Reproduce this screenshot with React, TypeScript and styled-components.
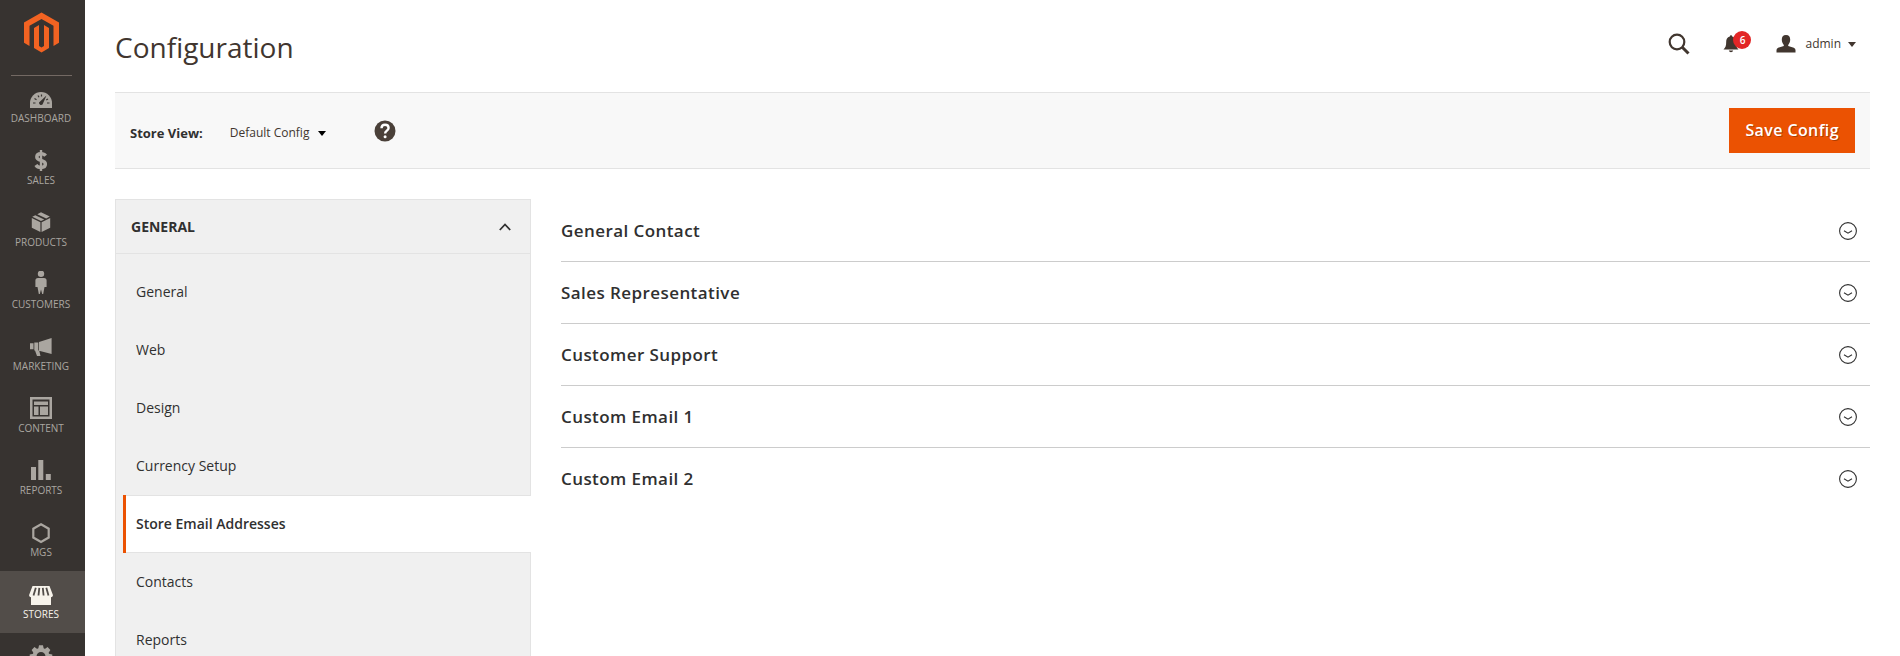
import React from 'react';
import styled, { createGlobalStyle, css } from 'styled-components';

const GlobalStyle = createGlobalStyle`
  *, *::before, *::after { box-sizing: border-box; }
  body {
    margin: 0;
    background: #fff;
    color: #303030;
    font-family: 'Open Sans', 'Noto Sans', sans-serif;
    font-size: 14px;
    line-height: 20px;
  }
  a { color: inherit; text-decoration: none; }
  button, select { font: inherit; color: inherit; }
  ul { list-style: none; margin: 0; padding: 0; }
`;

const Shell = styled.div`
  display: flex;
  min-height: 100vh;
`;

const Sidebar = styled.nav`
  flex: none;
  width: 85px;
  background: #373330;
`;

const LogoLink = styled.a`
  display: block;
  height: 75px;
  padding: 12px 0 0 23px;
  svg { display: block; }
`;

const Menu = styled.ul`
  &::before {
    content: '';
    display: block;
    height: 1px;
    margin: 0 13px -1px 11px;
    background: #736963;
  }
`;

const MenuLink = styled.a<{ $active?: boolean }>`
  display: flex;
  flex-direction: column;
  align-items: center;
  height: 62px;
  padding: 10px 3px 0 0;
  color: ${(p) => (p.$active ? '#f7f3eb' : '#aaa6a0')};
  background: ${(p) => (p.$active ? '#524d49' : 'transparent')};
  font-size: 10px;
  line-height: 12px;
  text-transform: uppercase;
  svg { display: block; flex: none; margin-bottom: -1px; }
`;

const Main = styled.main`
  flex: 1;
  min-width: 0;
  padding: 0 30px;
`;

const PageHeader = styled.header`
  display: flex;
  justify-content: space-between;
  height: 92px;
`;

const Title = styled.h1`
  margin: 0;
  padding-top: 27px;
  font-size: 28px;
  line-height: 40px;
  font-weight: 400;
  color: #41362f;
`;

const HeaderTools = styled.div`
  display: flex;
  align-items: center;
  height: 40px;
  margin-top: 24px;
  padding-right: 14px;
  color: #41362f;
`;

const ToolButton = styled.button<{ $gap: number }>`
  display: flex;
  align-items: center;
  position: relative;
  margin: 0 0 0 ${(p) => p.$gap}px;
  padding: 0;
  border: 0;
  background: none;
  font-size: 12px;
  color: #41362f;
  cursor: pointer;
  svg { display: block; }
`;

const Badge = styled.span`
  position: absolute;
  top: -4px;
  left: 10px;
  width: 18px;
  height: 18px;
  border-radius: 9px;
  background: #e22626;
  color: #fff;
  font-size: 10px;
  font-weight: 600;
  line-height: 18px;
  text-align: center;
`;

const UserName = styled.span`
  margin: 0 7px 0 9px;
`;

const ActionBar = styled.div`
  display: flex;
  align-items: center;
  height: 77px;
  padding: 0 15px;
  background: #f8f8f8;
  border-top: 1px solid #e3e3e3;
  border-bottom: 1px solid #e3e3e3;
`;

const StoreLabel = styled.label`
  padding-top: 5px;
  font-size: 13px;
  font-weight: 700;
`;

const SelectWrap = styled.div`
  display: flex;
  align-items: center;
  padding-top: 5px;
  margin-left: 27px;
  svg { margin-left: -10px; pointer-events: none; }
`;

const StoreSelect = styled.select`
  appearance: none;
  margin: 0;
  padding: 0 18px 0 0;
  border: 0;
  background: none;
  color: #41362f;
  font-size: 12px;
  line-height: 20px;
`;

const HelpLink = styled.a`
  margin-left: 48px;
  svg { display: block; }
`;

const SaveButton = styled.button`
  height: 45px;
  margin-left: auto;
  padding: 0 16px 2px;
  border: 0;
  background: #eb5202;
  color: #fff;
  font-size: 16px;
  font-weight: 600;
  letter-spacing: 0.025em;
  text-shadow: 1px 1px 0 rgba(0, 0, 0, 0.25);
  cursor: pointer;
`;

const Columns = styled.div`
  display: flex;
  align-items: flex-start;
  gap: 30px;
  padding-top: 30px;
`;

const ConfigNav = styled.aside`
  flex: none;
  width: 416px;
  background: #f0f0f0;
  border: 1px solid #e3e3e3;
`;

const NavHeading = styled.button`
  display: flex;
  align-items: center;
  justify-content: space-between;
  width: 100%;
  height: 54px;
  padding: 0 19px 0 15px;
  border: 0;
  border-bottom: 1px solid #e3e3e3;
  background: none;
  font-size: 14px;
  font-weight: 700;
  text-transform: uppercase;
  cursor: pointer;
`;

const NavList = styled.ul`
  padding: 9px 0 20px 7px;
`;

const NavLink = styled.a<{ $active?: boolean }>`
  display: flex;
  align-items: center;
  height: 58px;
  padding: 0 13px 0 10px;
  border-left: 3px solid transparent;
  ${(p) =>
    p.$active &&
    css`
      margin-right: -1px;
      background: #fff;
      border-left-color: #eb5202;
      box-shadow: inset 0 1px #e3e3e3, inset 0 -1px #e3e3e3;
      font-weight: 600;
    `}
`;

const Sections = styled.div`
  flex: 1;
  min-width: 0;
  padding-top: 1px;
`;

const SectionRow = styled.h2`
  margin: 0;
  font-size: 17px;
  font-weight: 600;
  & + & { border-top: 1px solid #ccc; }
`;

const SectionToggle = styled.button`
  display: flex;
  align-items: center;
  justify-content: space-between;
  width: 100%;
  height: 61px;
  padding: 0 13px 0 0;
  border: 0;
  background: none;
  letter-spacing: 0.025em;
  cursor: pointer;
  svg { display: block; }
`;

const Glyph = ({ children }: { children: React.ReactNode }) => (
  <svg width="28" height="28" viewBox="0 0 28 28" fill="currentColor" aria-hidden="true">
    {children}
  </svg>
);

const Caret = ({ color }: { color: string }) => (
  <svg width="8" height="5" viewBox="0 0 8 5" aria-hidden="true">
    <path d="M0 0h8L4 5z" fill={color} />
  </svg>
);

const gearTeeth = [0, 45, 90, 135, 180, 225, 270, 315];

const menu: { label: string; active?: boolean; iconOnly?: boolean; icon: React.ReactNode }[] = [
  {
    label: 'Dashboard',
    icon: (
      <Glyph>
        <path d="M3 23V18a11 11 0 0 1 22 0v5z" />
        <path d="M6 18h2.500M20 18h2.500M7.500 13.500l2 1.200M11 10.500l1 1.800M14.500 9.500v2M21 14l-1.800 1" stroke="#373330" strokeWidth="1.200" fill="none" />
        <path d="M19.500 10.500l-4 9a2.200 2.200 0 0 1-3.500-2z" fill="#373330" />
      </Glyph>
    ),
  },
  {
    label: 'Sales',
    icon: (
      <Glyph>
        <path d="M18.600 8.800C17.500 7.200 16 6.700 14 6.700c-2.600 0-4.200 1.300-4.200 3.200 0 4.700 8.600 2.400 8.600 7.100 0 2.200-1.900 3.500-4.500 3.500-2.100 0-3.900-.7-5-2.500" fill="none" stroke="currentColor" strokeWidth="3.400" />
        <path d="M14 3v21" stroke="currentColor" strokeWidth="2.400" />
      </Glyph>
    ),
  },
  {
    label: 'Products',
    icon: (
      <Glyph>
        <path d="M4.800 9l8.600 4.200V23L4.800 18.800zM23.200 9l-8.600 4.200V23l8.600-4.200zM8.300 6.200l8.900 4.200-3.200 1.600L5.300 7.700zM14 3.200l8.800 4.300-3.600 1.900-8.900-4.200z" />
      </Glyph>
    ),
  },
  {
    label: 'Customers',
    icon: (
      <Glyph>
        <circle cx="14" cy="2.800" r="3.200" />
        <path d="M11 7h6q2.600 0 2.600 2.600V16h-2.100l-1.300 7h-1L14 18.500 12.800 23h-1l-1.300-7H8.400V9.600Q8.400 7 11 7z" />
      </Glyph>
    ),
  },
  {
    label: 'Marketing',
    icon: (
      <Glyph>
        <path d="M24.600 5v16L12 17.700V9zM7.300 9.500h4v8h.9l1.300 5.600H10L8 17.500h-.7zM3 10.300h3.500v6H3z" />
      </Glyph>
    ),
  },
  {
    label: 'Content',
    icon: (
      <Glyph>
        <path d="M3 2h22v22H3zM5.500 4.500v17h17v-17z" fillRule="evenodd" />
        <path d="M7 6.500h14v3.500H7zM7 11.500h4.500V20H7zM13 11.500h8V20h-8z" />
      </Glyph>
    ),
  },
  {
    label: 'Reports',
    icon: (
      <Glyph>
        <path d="M4 10h5v13H4zM11.300 3h5v20h-5zM18.800 17h5v6h-5z" />
      </Glyph>
    ),
  },
  {
    label: 'MGS',
    icon: (
      <Glyph>
        <path d="M14 5.300l7.700 4.400v8.800L14 22.900l-7.700-4.400V9.700z" fill="none" stroke="currentColor" strokeWidth="2.200" />
      </Glyph>
    ),
  },
  {
    label: 'Stores',
    active: true,
    icon: (
      <Glyph>
        <path d="M5.500 5h17L26 14.200q-.4 2-2 2V24H4v-7.800q-1.600 0-2-2z" />
        <path d="M8.800 6.800L6.500 14.500M12.300 6.800l-.8 7.700M15.800 6.800l.8 7.700M19.300 6.800l2.200 7.700" stroke="#524d49" strokeWidth="1.800" fill="none" />
      </Glyph>
    ),
  },
  {
    label: 'System',
    iconOnly: true,
    icon: (
      <Glyph>
        {gearTeeth.map((a) => (
          <path key={a} d="M12 2.200h4l1 5h-6z" transform={`rotate(${a} 14 13.500)`} />
        ))}
        <circle cx="14" cy="13.500" r="6.500" fill="none" stroke="currentColor" strokeWidth="4" />
      </Glyph>
    ),
  },
];

const configPages = ['General', 'Web', 'Design', 'Currency Setup', 'Store Email Addresses', 'Contacts', 'Reports'];

const sections = ['General Contact', 'Sales Representative', 'Customer Support', 'Custom Email 1', 'Custom Email 2'];

export default function App() {
  return (
    <>
      <GlobalStyle />
      <Shell>
        <Sidebar aria-label="Main menu">
          <LogoLink href="#" aria-label="Magento Admin">
            <svg width="37" height="42" viewBox="0 0 37 42" fill="#f26322" aria-hidden="true">
              <path d="M18.500.5L36 10.600v20.200l-5.500 3.200V13.800L18.500 6.900 6.500 13.800V34L1 30.800V10.600z" />
              <path d="M11 15.900L16 13v21l2.500 1.500L21 34V13l5 2.900v20.200l-7.500 4.400-7.500-4.400z" />
            </svg>
          </LogoLink>
          <Menu>
            {menu.map((m) => (
              <li key={m.label}>
                <MenuLink href="#" $active={m.active} aria-label={m.label}>
                  {m.icon}
                  {!m.iconOnly && m.label}
                </MenuLink>
              </li>
            ))}
          </Menu>
        </Sidebar>
        <Main>
          <PageHeader>
            <Title>Configuration</Title>
            <HeaderTools>
              <ToolButton $gap={0} aria-label="Search">
                <svg width="22" height="22" viewBox="0 0 22 22" fill="none" stroke="currentColor">
                  <circle cx="9" cy="9" r="7.300" strokeWidth="2.200" />
                  <path d="M14 14l6.500 6.500" strokeWidth="3" />
                </svg>
              </ToolButton>
              <ToolButton $gap={33} aria-label="Notifications">
                <svg width="16" height="18" viewBox="0 0 16 18" fill="currentColor">
                  <path d="M6.800 1.500a1.200 1.200 0 0 1 2.400 0c2.600.6 3.600 2.700 3.600 5.200 0 4 .7 5.800 2.700 7.800H.5c2-2 2.700-3.800 2.700-7.800 0-2.500 1-4.600 3.600-5.200zM5.800 15.500h4.400q-.4 1.800-2.200 1.800t-2.200-1.800z" />
                </svg>
                <Badge>6</Badge>
              </ToolButton>
              <ToolButton $gap={37}>
                <svg width="20" height="18" viewBox="0 0 20 18" fill="currentColor" aria-hidden="true">
                  <path d="M10 0c3 0 4.200 1.800 4.200 4.600 0 2.300-.8 4.200-2 5.300v1l5.600 1.800q1.700.7 1.700 2.400V17.500H.5v-2.400q0-1.700 1.700-2.400l5.600-1.800v-1c-1.200-1.100-2-3-2-5.300C5.800 1.800 7 0 10 0z" />
                </svg>
                <UserName>admin</UserName>
                <Caret color="#41362f" />
              </ToolButton>
            </HeaderTools>
          </PageHeader>
          <ActionBar>
            <StoreLabel htmlFor="store-view">Store View:</StoreLabel>
            <SelectWrap>
              <StoreSelect id="store-view">
                <option>Default Config</option>
              </StoreSelect>
              <Caret color="#000" />
            </SelectWrap>
            <HelpLink href="#" aria-label="What is this?">
              <svg width="22" height="22" viewBox="0 0 22 22" aria-hidden="true">
                <circle cx="11" cy="11" r="10.500" fill="#4a4039" />
                <path d="M7.500 8.300c0-2 1.400-3.500 3.500-3.500s3.600 1.300 3.600 3.200c0 2.500-3.500 2.700-3.500 5.400" fill="none" stroke="#fff" strokeWidth="2.400" />
                <circle cx="11.100" cy="16.700" r="1.500" fill="#fff" />
              </svg>
            </HelpLink>
            <SaveButton>Save Config</SaveButton>
          </ActionBar>
          <Columns>
            <ConfigNav>
              <NavHeading aria-expanded="true">
                General
                <svg width="12" height="8" viewBox="0 0 12 8" fill="none" stroke="#303030" strokeWidth="1.800" aria-hidden="true">
                  <path d="M.8 7L6 1.500 11.200 7" />
                </svg>
              </NavHeading>
              <NavList>
                {configPages.map((name) => (
                  <li key={name}>
                    <NavLink href="#" $active={name === 'Store Email Addresses'}>
                      {name}
                    </NavLink>
                  </li>
                ))}
              </NavList>
            </ConfigNav>
            <Sections>
              {sections.map((name) => (
                <SectionRow key={name}>
                  <SectionToggle aria-expanded="false">
                    {name}
                    <svg width="18" height="18" viewBox="0 0 18 18" fill="none" stroke="#303030" aria-hidden="true">
                      <circle cx="9" cy="9" r="8.400" strokeWidth="1.100" />
                      <path d="M5 8.800L9 11.200l4-2.400" strokeWidth="1.100" />
                    </svg>
                  </SectionToggle>
                </SectionRow>
              ))}
            </Sections>
          </Columns>
        </Main>
      </Shell>
    </>
  );
}
